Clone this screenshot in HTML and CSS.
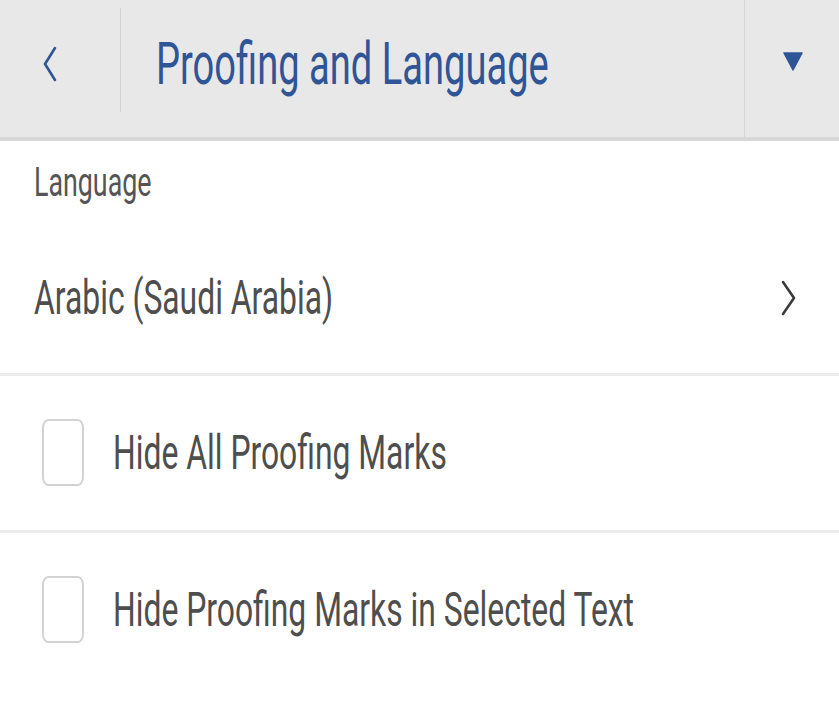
FILE: index.html
```html
<!DOCTYPE html>
<html lang="en">
<head>
<meta charset="utf-8">
<title>Proofing and Language</title>
<link rel="stylesheet" href="styles.css">
</head>
<body>
<div class="panel">
  <header class="topbar">
    <div class="back">
      <svg class="back-icon" width="16" height="36" viewBox="0 0 16 36" aria-hidden="true">
        <polyline points="13,2 3,18 13,34" fill="none" stroke="#2f5596" stroke-width="2.6" stroke-linecap="round" stroke-linejoin="round"/>
      </svg>
    </div>
    <div class="sep"></div>
    <h1 class="title"><span class="cond title-text">Proofing and Language</span></h1>
    <div class="menu">
      <svg width="20" height="19" viewBox="0 0 20 19" aria-hidden="true">
        <polygon points="1,1 19,1 10,18" fill="#2f5596" stroke="#2f5596" stroke-width="1.5" stroke-linejoin="round"/>
      </svg>
    </div>
  </header>

  <div class="section-label"><span class="cond label-text">Language</span></div>

  <div class="row lang-row">
    <span class="cond row-text">Arabic (Saudi Arabia)</span>
    <svg class="chev" width="16" height="36" viewBox="0 0 16 36" aria-hidden="true">
      <polyline points="2,2 13,18 2,34" fill="none" stroke="#3a3a3a" stroke-width="2.6" stroke-linecap="round" stroke-linejoin="round"/>
    </svg>
  </div>
  <div class="divider"></div>

  <div class="row check-row">
    <span class="box"></span>
    <span class="cond row-text">Hide All Proofing Marks</span>
  </div>
  <div class="divider"></div>

  <div class="row check-row">
    <span class="box"></span>
    <span class="cond row-text">Hide Proofing Marks in Selected Text</span>
  </div>
</div>
</body>
</html>
```

FILE: styles.css
```css
html, body {
  margin: 0;
  padding: 0;
  background: #ffffff;
}

body {
  font-family: Roboto, "Liberation Sans", sans-serif;
  width: 839px;
  height: 724px;
  overflow: hidden;
}

.panel {
  display: flex;
  flex-direction: column;
}

.cond {
  display: inline-block;
  white-space: nowrap;
  transform-origin: left center;
  line-height: 1;
}

/* top bar */
.topbar {
  height: 137px;
  background: #e8e8e8;
  border-bottom: 4px solid #d7d7d7;
  display: flex;
  align-items: stretch;
}

.back {
  flex: none;
  width: 120px;
  display: flex;
  align-items: center;
  padding-left: 42px;
  box-sizing: border-box;
  padding-bottom: 10px;
}

.sep {
  flex: none;
  width: 1px;
  background: #d2d2d2;
  margin: 8px 0 25px;
}

.title {
  margin: 0;
  flex: 1;
  min-width: 0;
  display: flex;
  align-items: center;
  padding-left: 35px;
  padding-bottom: 10px;
  font-weight: 400;
  border-right: 1px solid #d6d6d6;
  overflow: hidden;
}

.title-text {
  font-size: 60px;
  color: #2f5596;
  transform: scaleX(0.635);
}

.menu {
  flex: none;
  width: 94px;
  display: flex;
  align-items: center;
  justify-content: center;
  padding-bottom: 14px;
  box-sizing: border-box;
  padding-left: 2px;
}

/* section label */
.section-label {
  padding: 22px 0 20px 34px;
  height: 40px;
}

.label-text {
  font-size: 40px;
  color: #555555;
  transform: scaleX(0.67);
}

/* rows */
.row {
  display: flex;
  align-items: center;
}

.row-text {
  font-size: 49px;
  color: #4e4e4e;
  transform: scaleX(0.65);
}

.lang-row {
  height: 149px;
  padding-left: 34px;
  padding-right: 42px;
  justify-content: space-between;
}

.chev {
  flex: none;
}

.divider {
  height: 3px;
  background: #ececec;
  margin-top: 1px;
}

.check-row {
  height: 153px;
  padding-left: 42px;
  gap: 29px;
}

.box {
  width: 42px;
  height: 67px;
  box-sizing: border-box;
  border: 2px solid #d3d3d3;
  border-radius: 6px / 9px;
  flex: none;
}
```
